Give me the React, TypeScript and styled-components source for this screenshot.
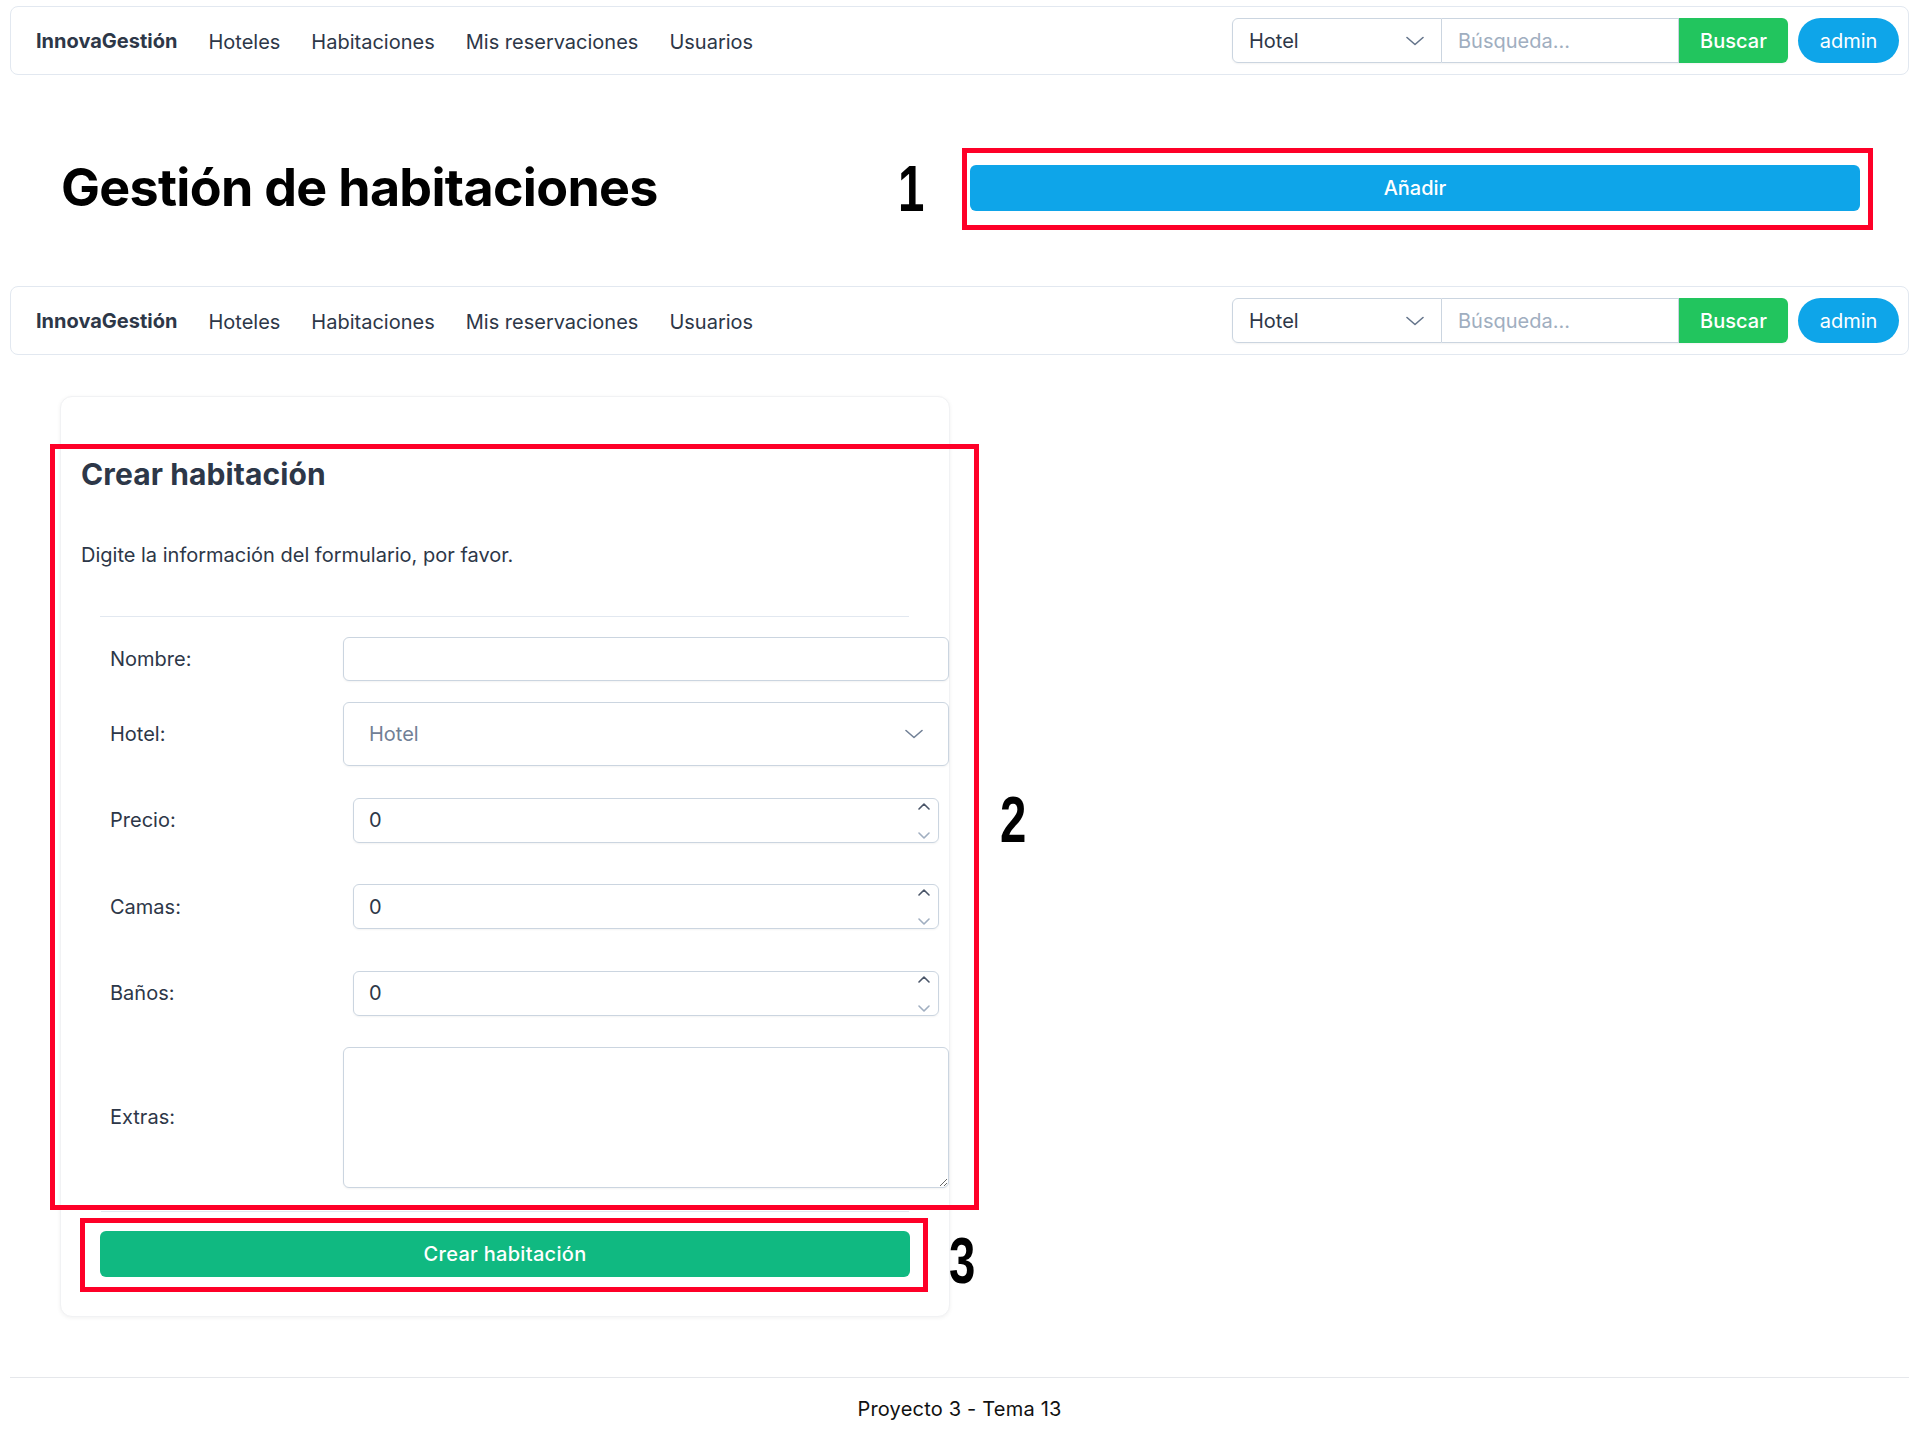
import * as React from 'react';
import styled, { createGlobalStyle } from 'styled-components';

const GlobalStyle = createGlobalStyle`
  body {
    margin: 0;
    background: #fff;
    font-family: Inter, "Open Sans", sans-serif;
    color: #2d3748;
  }
  * { box-sizing: border-box; }
`;

const Page = styled.div`
  padding: 6px 11px 0 10px;
`;

/* ---------- navbar ---------- */

const NavBar = styled.nav`
  display: flex;
  align-items: center;
  height: 69px;
  border: 1px solid #e2e8f0;
  border-radius: 8px;
  padding: 0 9px 0 25px;
  background: #fff;
`;

const Brand = styled.span`
  font-size: 20px;
  font-weight: 700;
  color: #2d3748;
  margin-right: 31px;
`;

const NavLinks = styled.div`
  display: flex;
  gap: 31px;
  padding-top: 3px;
`;

const NavLink = styled.a`
  font-size: 20px;
  color: #2d3748;
  text-decoration: none;
`;

const SearchGroup = styled.div`
  margin-left: auto;
  display: flex;
  height: 45px;
  border-radius: 6px;
  box-shadow: 0 1px 2px rgba(0, 0, 0, 0.05);
`;

const TopSelect = styled.div`
  width: 210px;
  display: flex;
  align-items: center;
  justify-content: space-between;
  padding: 0 17px 0 16px;
  border: 1px solid #cbd5e0;
  border-radius: 6px 0 0 6px;
  font-size: 20px;
  color: #2d3748;
`;

const SearchInput = styled.input`
  width: 237px;
  border: 1px solid #cbd5e0;
  border-left: none;
  padding: 0 16px;
  font-family: inherit;
  font-size: 20px;
  color: #2d3748;
  outline: none;
  &::placeholder { color: #a0aec0; }
`;

const SearchButton = styled.button`
  width: 109px;
  border: none;
  border-radius: 0 6px 6px 0;
  background: #22c55e;
  color: #fff;
  font-family: inherit;
  font-size: 20px;
  font-weight: 500;
`;

const UserButton = styled.button`
  margin-left: 10px;
  width: 101px;
  height: 45px;
  border: none;
  border-radius: 9999px;
  background: #0ea5e9;
  color: #fff;
  font-family: inherit;
  font-size: 20px;
`;

/* ---------- annotations ---------- */

const Marker = styled.span`
  display: inline-block;
  font-family: "Liberation Sans", Arial, sans-serif;
  font-weight: 700;
  font-size: 64px;
  line-height: 64px;
  color: #000;
  transform: scaleX(0.74);
  transform-origin: left center;
`;

const FloatMarker = styled(Marker)<{ $top: number }>`
  position: absolute;
  left: calc(100% + 26px);
  top: ${(p) => p.$top}px;
`;

const Highlight = styled.div`
  position: relative;
  border: 5px solid #fe0028;
`;

/* ---------- page header ---------- */

const HeaderRow = styled.header`
  display: flex;
  align-items: center;
  margin: 73px 36px 56px 51px;
`;

const PageTitle = styled.h1`
  flex: 1;
  margin: 0 0 4px;
  font-size: 52px;
  font-weight: 700;
  letter-spacing: -0.7px;
  color: #000;
`;

const AddBox = styled(Highlight)`
  width: 911px;
  margin-left: 28px;
  padding: 12px 8px 14px 3px;
`;

const AddButton = styled.button`
  width: 100%;
  height: 46px;
  border: none;
  border-radius: 6px;
  background: #0ea5e9;
  color: #fff;
  font-family: inherit;
  font-size: 20px;
  font-weight: 500;
`;

/* ---------- form card ---------- */

const Card = styled.section`
  width: 890px;
  margin: 41px 0 0 50px;
  padding: 47px 0 24px;
  border: 1px solid #f1f2f4;
  border-radius: 12px;
  background: #fff;
  box-shadow: 0 1px 4px rgba(0, 0, 0, 0.06);
`;

const FormBox = styled(Highlight)`
  margin: 0 -30px 0 -11px;
  padding: 7px 0 17px 26px;
`;

const CardTitle = styled.h2`
  margin: 0;
  font-size: 30px;
  line-height: 36px;
  font-weight: 700;
  letter-spacing: 0.1px;
  color: #2d3748;
`;

const CardText = styled.p`
  margin: 50px 0 0;
  font-size: 20px;
  line-height: 27px;
  color: #2d3748;
`;

const Rule = styled.hr<{ $margin: string }>`
  height: 1px;
  border: none;
  background: #e2e8f0;
  margin: ${(p) => p.$margin};
`;

const FormGrid = styled.div`
  display: grid;
  grid-template-columns: 233px 1fr;
  row-gap: 21.4px;
  align-items: center;
  margin: 20px 25px 0 29px;
`;

const Label = styled.label`
  font-size: 20px;
  color: #2d3748;
`;

const TextInput = styled.input`
  width: 100%;
  height: 44px;
  border: 1px solid #cbd5e0;
  border-radius: 6px;
  box-shadow: 0 1px 2px rgba(0, 0, 0, 0.05);
  outline: none;
`;

const FormSelect = styled.div`
  height: 64px;
  display: flex;
  align-items: center;
  justify-content: space-between;
  padding: 0 25px;
  border: 1px solid #cbd5e0;
  border-radius: 6px;
  box-shadow: 0 1px 2px rgba(0, 0, 0, 0.05);
  font-size: 20px;
  color: #718096;
`;

const NumberBox = styled.div`
  margin: 10px;
  height: 45px;
  display: flex;
  padding-left: 15px;
  border: 1px solid #cbd5e0;
  border-radius: 6px;
  box-shadow: 0 1px 2px rgba(0, 0, 0, 0.05);
`;

const NumberValue = styled.input`
  flex: 1;
  min-width: 0;
  border: none;
  outline: none;
  background: transparent;
  padding: 0;
  font-family: inherit;
  font-size: 20px;
  color: #2d3748;
`;

const Spinner = styled.div`
  display: flex;
  flex-direction: column;
  justify-content: space-between;
  padding: 4px 8px 3px;
`;

const TextArea = styled.textarea`
  display: block;
  width: 100%;
  height: 141px;
  border: 1px solid #cbd5e0;
  border-radius: 6px;
  box-shadow: 0 1px 2px rgba(0, 0, 0, 0.05);
  resize: vertical;
  outline: none;
`;

const SubmitBox = styled(Highlight)`
  margin: 6px 21px 0 19px;
  padding: 8px 13px 10px 15px;
`;

const SubmitButton = styled.button`
  width: 100%;
  height: 46px;
  border: none;
  border-radius: 6px;
  background: #10b981;
  color: #fff;
  font-family: inherit;
  font-size: 20px;
  font-weight: 500;
  letter-spacing: 0.3px;
`;

const Footer = styled.footer`
  margin-top: 60px;
  padding-top: 17px;
  border-top: 1px solid #e5e7eb;
  text-align: center;
  font-size: 20px;
  line-height: 28px;
  letter-spacing: 0.2px;
  color: #111;
`;

/* ---------- icons ---------- */

function Chevron({ color = '#4a5568' }: { color?: string }) {
  return (
    <svg width="18" height="10" viewBox="0 0 18 10" fill="none">
      <polyline points="1,1.5 9,8.5 17,1.5" stroke={color} strokeWidth="1.6" strokeLinecap="round" strokeLinejoin="round" />
    </svg>
  );
}

function SpinArrow({ up, color }: { up?: boolean; color: string }) {
  return (
    <svg width="12" height="7" viewBox="0 0 12 7" fill="none">
      <polyline
        points={up ? '1,6 6,1 11,6' : '1,1 6,6 11,1'}
        stroke={color}
        strokeWidth="1.6"
        strokeLinecap="round"
        strokeLinejoin="round"
      />
    </svg>
  );
}

function TopNav() {
  return (
    <NavBar>
      <Brand>InnovaGestión</Brand>
      <NavLinks>
        <NavLink>Hoteles</NavLink>
        <NavLink>Habitaciones</NavLink>
        <NavLink>Mis reservaciones</NavLink>
        <NavLink>Usuarios</NavLink>
      </NavLinks>
      <SearchGroup>
        <TopSelect>
          Hotel
          <Chevron color="#64748b" />
        </TopSelect>
        <SearchInput placeholder="Búsqueda..." />
        <SearchButton>Buscar</SearchButton>
      </SearchGroup>
      <UserButton>admin</UserButton>
    </NavBar>
  );
}

function NumberField({ id }: { id: string }) {
  return (
    <NumberBox>
      <NumberValue id={id} defaultValue="0" readOnly />
      <Spinner>
        <SpinArrow up color="#4a5568" />
        <SpinArrow color="#a0aec0" />
      </Spinner>
    </NumberBox>
  );
}

export default function App() {
  return (
    <Page>
      <GlobalStyle />
      <TopNav />

      <HeaderRow>
        <PageTitle>Gestión de habitaciones</PageTitle>
        <Marker>1</Marker>
        <AddBox>
          <AddButton>Añadir</AddButton>
        </AddBox>
      </HeaderRow>

      <TopNav />

      <Card>
        <FormBox>
          <CardTitle>Crear habitación</CardTitle>
          <CardText>Digite la información del formulario, por favor.</CardText>
          <Rule $margin="47px 65px 0 19px" />
          <FormGrid>
            <Label htmlFor="nombre">Nombre:</Label>
            <TextInput id="nombre" />

            <Label>Hotel:</Label>
            <FormSelect>
              Hotel
              <Chevron color="#718096" />
            </FormSelect>

            <Label htmlFor="precio">Precio:</Label>
            <NumberField id="precio" />

            <Label htmlFor="camas">Camas:</Label>
            <NumberField id="camas" />

            <Label htmlFor="banos">Baños:</Label>
            <NumberField id="banos" />

            <Label htmlFor="extras">Extras:</Label>
            <TextArea id="extras" />
          </FormGrid>
          <FloatMarker $top={339}>2</FloatMarker>
        </FormBox>
        <Rule $margin="1px 40px 0" />
        <SubmitBox>
          <SubmitButton>Crear habitación</SubmitButton>
          <FloatMarker $top={6}>3</FloatMarker>
        </SubmitBox>
      </Card>

      <Footer>Proyecto 3 - Tema 13</Footer>
    </Page>
  );
}
